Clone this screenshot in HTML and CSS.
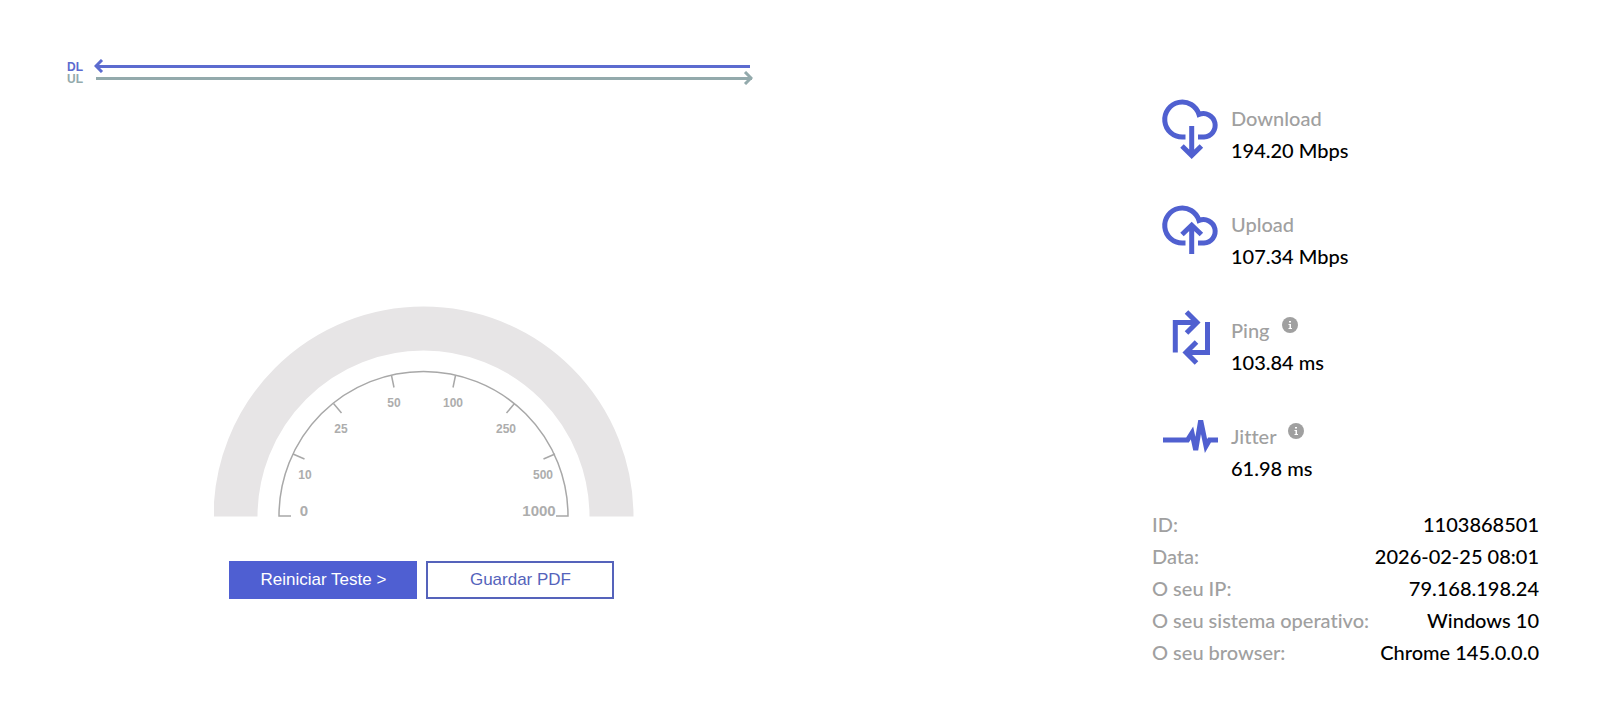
FILE: index.html
```html
<!DOCTYPE html>
<html lang="pt">
  <head>
    <meta charset="UTF-8" />
    <meta name="viewport" content="width=device-width, initial-scale=1.0" />
    <title>Teste de velocidade</title>
    <link rel="stylesheet" href="styles.css">
  </head>

  <body>
    <main class="speedtest">
      <section class="test">
        <!-- Download / upload progress lines -->
        <div class="lines">
          <div class="line download">
            <span>DL</span>
            <svg class="head" width="10" height="14" viewBox="0 0 10 14"><path d="M8 1L2 7L8 13" /></svg>
            <div class="bar"></div>
          </div>
          <div class="line upload">
            <span>UL</span>
            <div class="bar"></div>
            <svg class="head" width="10" height="14" viewBox="0 0 10 14"><path d="M2 1L8 7L2 13" /></svg>
          </div>
        </div>

        <svg class="gauge" width="420" height="216" viewBox="0 0 420 216">
          <path class="ring" d="M21.500 211.500A188 188 0 0 1 397.500 211.500" />
          <path class="scale" d="M77 211H65A144.500 144.500 0 0 1 354 211H342" />
          <path class="scale" d="M79 149L90.500 154M119.500 98.500L127.500 108M177.500 70.500L180 82.500M241.500 70.500L239 82.500M300.500 98.500L292.500 108M341 149L329.500 154" />
          <g class="small">
            <text x="91" y="174">10</text>
            <text x="127" y="128">25</text>
            <text x="180" y="102">50</text>
            <text x="239" y="102">100</text>
            <text x="292" y="128">250</text>
            <text x="329" y="174">500</text>
          </g>
          <g class="big">
            <text x="90" y="211">0</text>
            <text x="325" y="211">1000</text>
          </g>
        </svg>

        <div class="buttons">
          <button class="primary" type="button">Reiniciar Teste &gt;</button>
          <button type="button">Guardar PDF</button>
        </div>
      </section>

      <section class="results">
        <div class="metrics">
          <div class="metric">
            <svg class="icon" width="56" height="68" viewBox="0 0 56 68">
              <path d="M22.500 37H19.500A17.500 17.500 0 1 1 36 14.500A11.700 11.700 0 1 1 41 37H35M28.700 26V55M19 46L28.700 55.500L38.400 46" />
            </svg>
            <div>
              <div class="caption">Download</div>
              <div>194.20 Mbps</div>
            </div>
          </div>
          <div class="metric">
            <svg class="icon" width="56" height="68" viewBox="0 0 56 68">
              <path d="M22.500 37H19.500A17.500 17.500 0 1 1 36 14.500A11.700 11.700 0 1 1 41 37H35M28.700 48V20M19 28.500L28.700 19.200L38.400 28.500" />
            </svg>
            <div>
              <div class="caption">Upload</div>
              <div>107.34 Mbps</div>
            </div>
          </div>
          <div class="metric">
            <svg class="icon" width="56" height="68" viewBox="0 0 56 68">
              <path d="M12.300 40.500V10.500H33M23.500 0L34 10.500L23.500 21M44.500 10V40.500H24M33.500 30L23 40.500L33.500 51" />
            </svg>
            <div>
              <div class="caption">Ping <svg class="info" width="16" height="16" viewBox="0 0 16 16"><circle cx="8" cy="8" r="8" /><path d="M7 4h2v1.500H7zM6.500 7H9v4h1v1H6.500v-1H7.500V8h-1z" /></svg></div>
              <div>103.84 ms</div>
            </div>
          </div>
          <div class="metric">
            <svg class="icon" width="56" height="68" viewBox="0 0 56 68">
              <path d="M0 22H24.500L29 15L32.700 32L37.700 2.500L43 28L46.500 22H55" />
            </svg>
            <div>
              <div class="caption">Jitter <svg class="info" width="16" height="16" viewBox="0 0 16 16"><circle cx="8" cy="8" r="8" /><path d="M7 4h2v1.500H7zM6.500 7H9v4h1v1H6.500v-1H7.500V8h-1z" /></svg></div>
              <div>61.98 ms</div>
            </div>
          </div>
        </div>

        <dl class="details">
          <div><dt>ID:</dt><dd>1103868501</dd></div>
          <div><dt>Data:</dt><dd>2026-02-25 08:01</dd></div>
          <div><dt>O seu IP:</dt><dd>79.168.198.24</dd></div>
          <div><dt>O seu sistema operativo:</dt><dd>Windows 10</dd></div>
          <div><dt>O seu browser:</dt><dd>Chrome 145.0.0.0</dd></div>
        </dl>
      </section>
    </main>
  </body>
</html>
```
FILE: styles.css
```css
body {
  margin: 0;
  background-color: white;
  color: black;
  font-family: Lato, "Noto Sans", sans-serif;
  font-size: 20px;
  font-weight: 500;
  font-variant-ligatures: none;
  line-height: 32px;
}
.speedtest {
  display: flex;
  justify-content: space-between;
  align-items: flex-start;
  padding: 60px 67px 20px;
}

/* left side */
.test {
  width: 48.5%;
  font-family: "Liberation Sans", Arial, sans-serif;
}
.lines {
  padding-right: 28px;
}
.line {
  display: flex;
  align-items: center;
  height: 12px;
  font-size: 12px;
  font-weight: bold;
  line-height: 12px;
}
.line span {
  width: 27px;
  padding-top: 2px;
}
.bar {
  flex: 1;
  height: 3px;
  background-color: currentColor;
}
.head {
  fill: none;
  stroke: currentColor;
  stroke-width: 3;
}
.download {
  color: #5c6bcf;
}
.download .head {
  margin-right: -8px;
}
.download .bar {
  margin-right: 3px;
}
.upload {
  color: #93aaac;
}
.upload .bar {
  margin-left: 2px;
}
.upload .head {
  margin-left: -9px;
}
.gauge {
  display: block;
  margin: 221px auto 40px;
}
.ring {
  fill: none;
  stroke: #e7e5e6;
  stroke-width: 44;
}
.scale {
  fill: none;
  stroke: #a8a8a8;
  stroke-width: 1.5;
}
.gauge text {
  fill: #adadad;
  font-weight: bold;
  text-anchor: middle;
}
.small {
  font-size: 12px;
}
.big {
  font-size: 15px;
}
.buttons {
  display: flex;
  justify-content: center;
  gap: 9px;
  padding-right: 4px;
}
.buttons button {
  width: 188px;
  height: 38px;
  border: 2px solid #5563bb;
  background-color: white;
  color: #5563bb;
  font-family: inherit;
  font-size: 17px;
  cursor: pointer;
}
.buttons .primary {
  border-color: #4f5fd2;
  background-color: #4f5fd2;
  color: white;
}

/* right side */
.results {
  width: 387px;
  padding-top: 40px;
}
.metrics {
  display: flex;
  flex-direction: column;
  gap: 38px;
  padding-left: 11px;
}
.metric {
  display: flex;
  align-items: center;
  gap: 12px;
}
.icon {
  fill: none;
  stroke: #5060d0;
  stroke-width: 5;
  overflow: visible;
}
.caption,
.details dt {
  color: #a0a0a0;
}
.caption {
  height: 32px;
}
.info {
  margin-left: 7px;
  vertical-align: 5px;
}
.info circle {
  fill: #a0a0a0;
}
.info path {
  fill: white;
}
.details {
  margin: 22px 0 0;
}
.details div {
  display: flex;
  justify-content: space-between;
}
.details dd {
  margin: 0;
}
```
